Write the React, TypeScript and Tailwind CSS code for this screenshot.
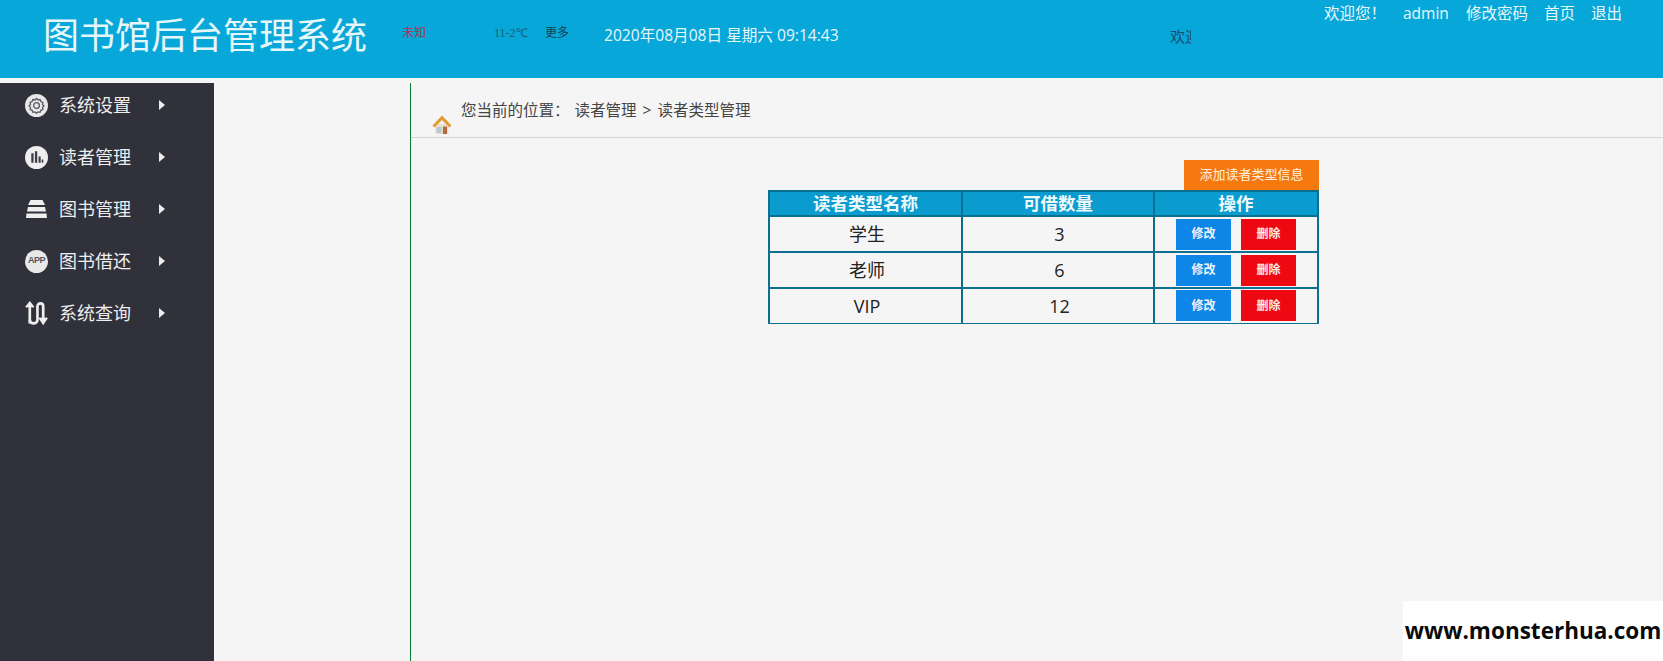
import { ReactNode } from 'react';

const FONT = 'font-["Open_Sans","Noto_Sans_CJK_SC",sans-serif]';

function GearIcon() {
  return (
    <svg viewBox="0 0 22 22" className="h-[23px] w-[23px]">
      <circle cx="11" cy="11" r="11" fill="#e8e8e8" />
      <path
        d="M11 4.200l1.400 1.500 2-.4.8 1.900 1.900.8-.4 2 1.500 1.400-1.500 1.400.4 2-1.900.8-.8 1.900-2-.4-1.400 1.500-1.400-1.500-2 .4-.8-1.900-1.900-.8.4-2L3.800 11.400l1.500-1.400-.4-2 1.900-.8.8-1.900 2 .4z"
        fill="none"
        stroke="#55565e"
        strokeWidth="1.2"
      />
      <circle cx="11" cy="11" r="2.800" fill="none" stroke="#55565e" strokeWidth="1.2" />
    </svg>
  );
}

function ChartIcon() {
  return (
    <svg viewBox="0 0 22 22" className="h-[23px] w-[23px]">
      <circle cx="11" cy="11" r="11" fill="#eeeeee" />
      <path d="M6 7h2.200v9H6zM9.500 5h2.200v11H9.500zM13 10h2v6h-2zM16 13h1.500v3H16z" fill="#3c3d45" />
    </svg>
  );
}

function StackIcon() {
  return (
    <svg viewBox="0 0 22 20" className="h-[20px] w-[23px]">
      <path d="M5 1h12l2.500 5H2.500z" fill="#eeeeee" />
      <path d="M2.500 8h17l1 4.500H1.500z" fill="#eeeeee" />
      <path d="M1 14.500h20l.5 4.500H.5z" fill="#eeeeee" />
    </svg>
  );
}

function AppIcon() {
  return (
    <span className="flex h-[23px] w-[23px] items-center justify-center rounded-full bg-[#e8e8e8] font-['Liberation_Sans',sans-serif] text-[9px] font-bold tracking-[-0.5px] text-[#55565e]">
      APP
    </span>
  );
}

function SwapIcon() {
  return (
    <svg viewBox="0 0 24 26" className="h-[26px] w-[23px]" fill="none" stroke="#eeeeee" strokeWidth="2.800">
      <path d="M5 24V4" />
      <path d="M1 7l4-5 4 5" strokeWidth="2" fill="#eeeeee" />
      <path d="M5 20c0 5 8 5 8 0V6c0-4 6-4 6 0v14" />
      <path d="M15 18l4 6 4-6" strokeWidth="2" fill="#eeeeee" />
    </svg>
  );
}

function HomeIcon() {
  return (
    <svg viewBox="0 0 20 20" className="h-[20px] w-[20px] shrink-0">
      <path d="M3.500 9h13v10h-13z" fill="#e9dfd2" />
      <path d="M4.500 12h5v6h-5z" fill="#b9c9d0" />
      <path d="M11 11.500h4V19h-4z" fill="#b5683a" />
      <path d="M10 .5L.5 10.500 2.500 12.500 10 5l7.500 7.500 2-2z" fill="#e39a34" />
    </svg>
  );
}

const menu: { label: string; icon: ReactNode }[] = [
  { label: '系统设置', icon: <GearIcon /> },
  { label: '读者管理', icon: <ChartIcon /> },
  { label: '图书管理', icon: <StackIcon /> },
  { label: '图书借还', icon: <AppIcon /> },
  { label: '系统查询', icon: <SwapIcon /> },
];

const rows = [
  { name: '学生', count: '3', height: 'h-[36px]' },
  { name: '老师', count: '6', height: 'h-[36px]' },
  { name: 'VIP', count: '12', height: 'h-[35px]' },
];

export default function App() {
  return (
    <div className={`relative flex h-[661px] w-full flex-col overflow-hidden bg-[#f5f5f5] ${FONT}`}>
      <header className="flex h-[78px] shrink-0 bg-[#07a7d9] text-[#e6f7fa]">
        <h1 className="ml-[43px] mt-[13px] w-[325px] whitespace-nowrap text-[36px] font-normal leading-[46px]">
          图书馆后台管理系统
        </h1>
        <span className="ml-[34px] mt-[24px] w-[92px] text-[12px] leading-[18px] text-[#a93450]">未知</span>
        <span className="mt-[24px] w-[51px] whitespace-nowrap font-['Liberation_Serif',serif] text-[12px] leading-[18px] text-[#1d5a73]">
          11-2℃
        </span>
        <span className="mt-[24px] w-[59px] text-[12px] leading-[18px] text-[#123f56]">更多</span>
        <span className="mt-[25px] w-[566px] whitespace-nowrap text-[15.600px] leading-[20px] text-[#e6f7fa]">
          2020年08月08日 星期六 09:14:43
        </span>
        <span className="mt-[26px] h-[20px] w-[21px] overflow-hidden whitespace-nowrap text-[15px] leading-[20px] text-[#184f78]">
          欢迎
        </span>
        <nav className="ml-[133px] mt-[2px] flex h-[22px] whitespace-nowrap text-[15.500px] leading-[22px]">
          <span className="w-[79px]">欢迎您！</span>
          <span className="w-[63px]">admin</span>
          <span className="w-[78px]">修改密码</span>
          <span className="w-[47px]">首页</span>
          <span>退出</span>
        </nav>
      </header>

      <div className="mt-[5px] flex min-h-0 flex-1">
        <aside className="w-[214px] shrink-0 bg-[#30313a]">
          <div className="-mt-[4px]">
            {menu.map((item) => (
              <div key={item.label} className="flex h-[52px] items-center pl-[25px] text-[#eeeeee]">
                <span className="flex w-[34px] shrink-0 justify-start">{item.icon}</span>
                <span className="w-[100px] whitespace-nowrap text-[18px] leading-[24px]">{item.label}</span>
                <span className="h-0 w-0 border-y-[5px] border-l-[6px] border-y-transparent border-l-[#eeeeee]" />
              </div>
            ))}
          </div>
        </aside>

        <main className="ml-[196px] flex-1 border-l border-[#0c7a35]">
          <div className="flex h-[55px] border-b border-[#d3d4d4] pl-[21px] text-[15.500px] text-[#444444]">
            <span className="mt-[32px]">
              <HomeIcon />
            </span>
            <span className="ml-[9px] mt-[16px] h-[22px] whitespace-nowrap leading-[22px]">
              您当前的位置：
              <span className="ml-[5px]">读者管理</span>
              <span className="mx-[6px]">&gt;</span>
              <span>读者类型管理</span>
            </span>
          </div>

          <div className="ml-[357px] mt-[22px] w-[551px]">
            <div className="flex justify-end">
              <button className="h-[30px] w-[135px] bg-[#f5790f] text-[13px] text-[#fff2e0]">添加读者类型信息</button>
            </div>
            <table className="w-full table-fixed border-collapse text-center">
              <thead>
                <tr className="h-[25px] bg-[#0a9bcf] text-[17.500px] leading-[21px] text-[#eef9fc]">
                  <th className="w-[193px] border-2 border-[#0b6f8f] font-bold">读者类型名称</th>
                  <th className="w-[192px] border-2 border-[#0b6f8f] font-bold">可借数量</th>
                  <th className="border-2 border-[#0b6f8f] font-bold">操作</th>
                </tr>
              </thead>
              <tbody className="text-[18px] leading-[24px] text-[#222222]">
                {rows.map((row) => (
                  <tr key={row.name} className={`${row.height} [&:last-child>td]:border-b`}>
                    <td className="border-2 border-[#0b6f8f] pl-[3px]">{row.name}</td>
                    <td className="border-2 border-[#0b6f8f] pl-[3px]">{row.count}</td>
                    <td className="border-2 border-[#0b6f8f]">
                      <div className="flex justify-center gap-[10px]">
                        <button className="h-[31px] w-[55px] bg-[#0e86e8] text-[12px] font-semibold text-[#eef6fd]">修改</button>
                        <button className="h-[31px] w-[55px] bg-[#ee0812] text-[12px] font-semibold text-[#fde8ea]">删除</button>
                      </div>
                    </td>
                  </tr>
                ))}
              </tbody>
            </table>
          </div>
        </main>
      </div>

      <div className="absolute bottom-0 right-0 flex h-[60px] w-[260px] items-center justify-center bg-white text-[22.500px] font-bold text-[#0a0a0a]">
        www.monsterhua.com
      </div>
    </div>
  );
}
